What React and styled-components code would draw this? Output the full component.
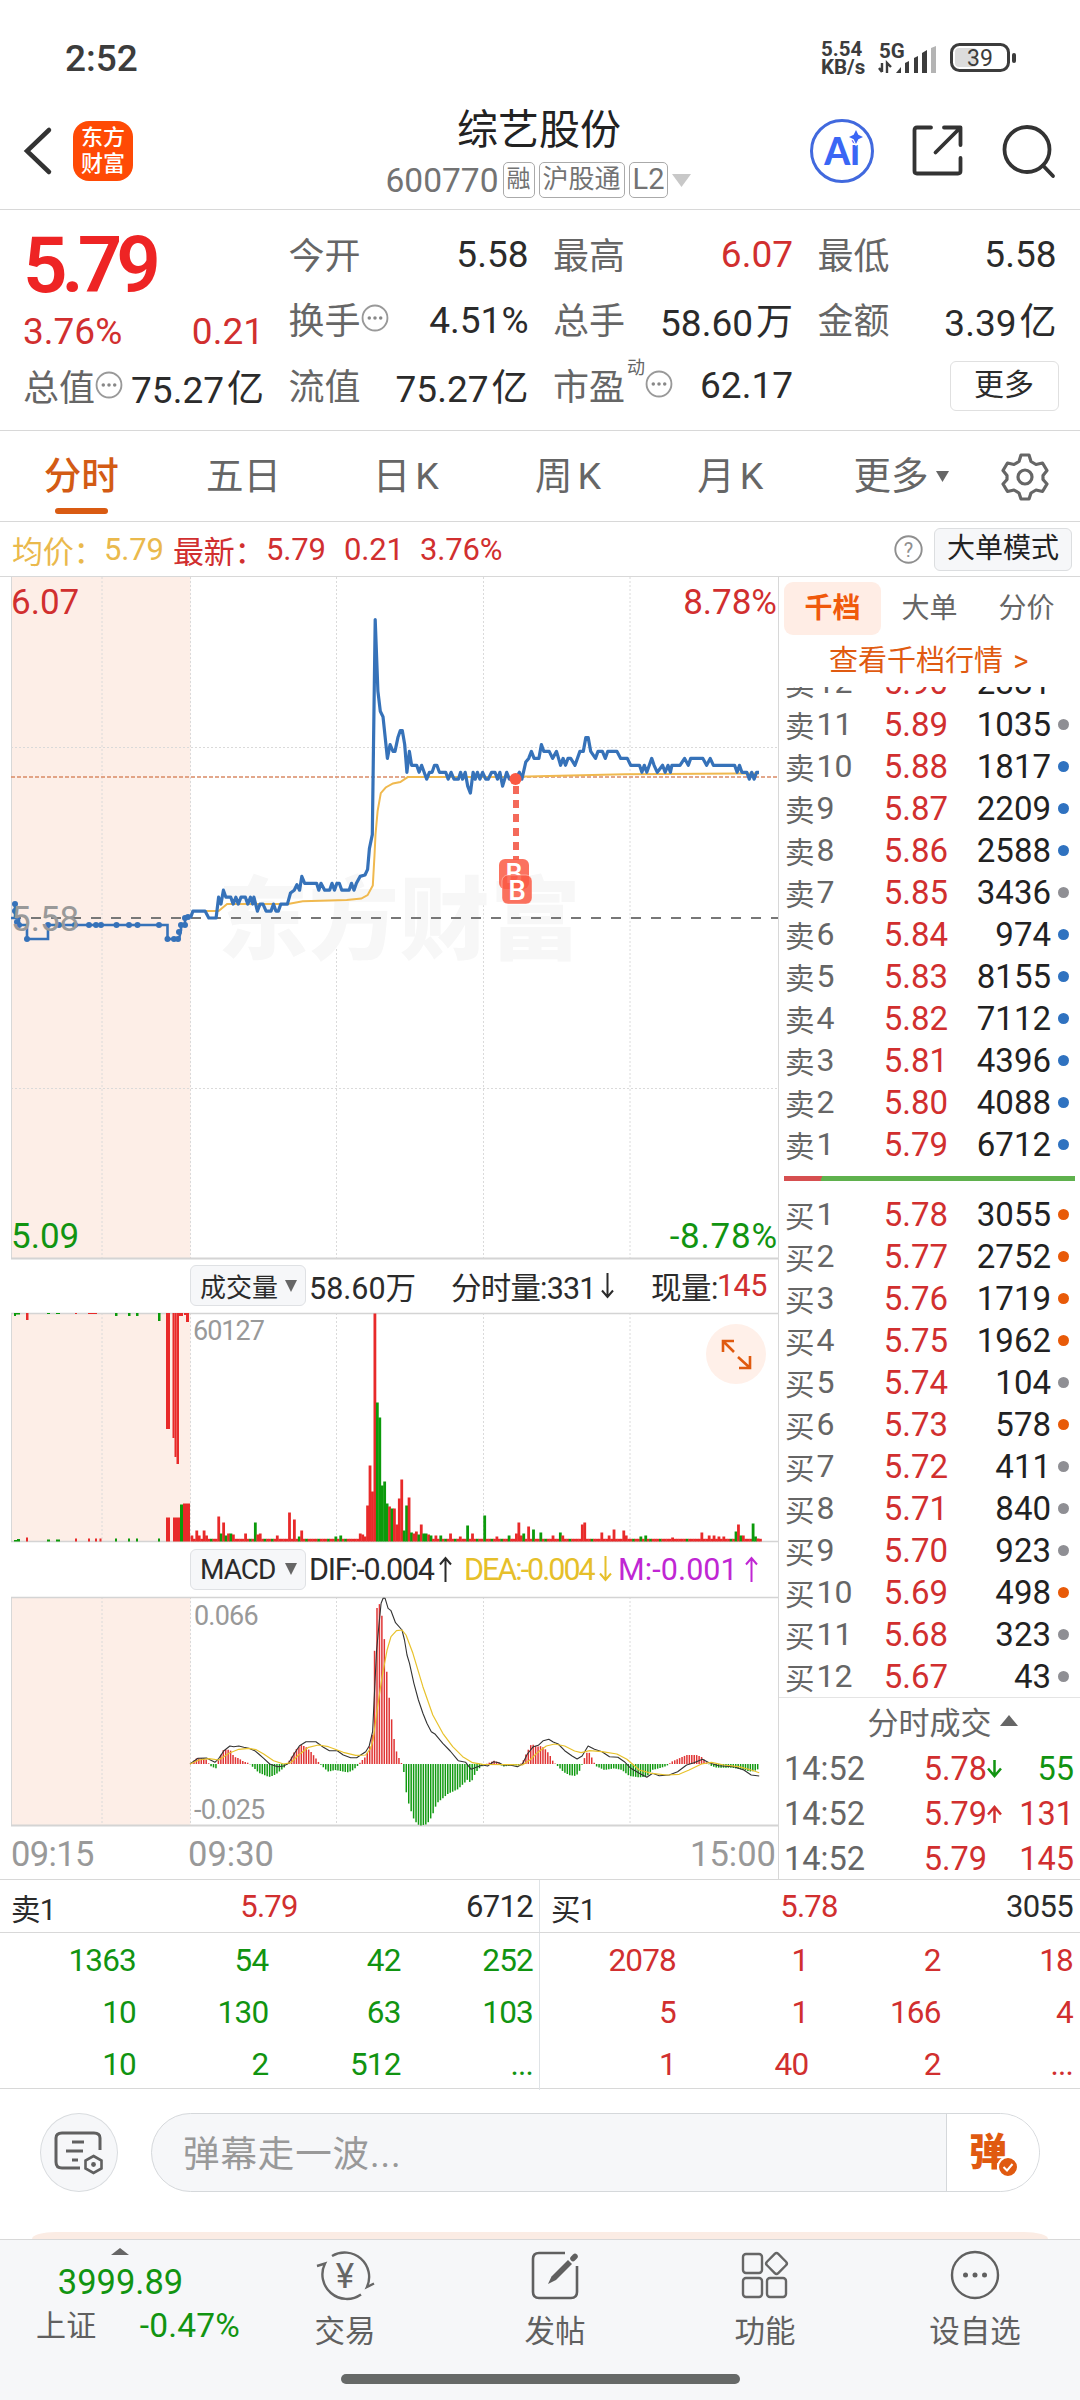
import React from 'react';
import styled, { createGlobalStyle } from 'styled-components';

const red = '#d12f2f';
const green = '#119411';
const orange = '#e05a10';
const line = '#d8d8d8';

const GlobalStyle = createGlobalStyle`
  * {
    box-sizing: border-box;
  }
  body {
    margin: 0;
    background: #fff;
    color: #2b2b2b;
    font-family: Roboto, "Noto Sans CJK SC", sans-serif;
  }
  svg {
    display: block;
    flex: none;
    overflow: visible;
  }
`;

const Page = styled.div`
  width: 1080px;
  height: 2400px;
  overflow: hidden;
  display: flex;
  flex-direction: column;
  white-space: nowrap;
`;

/* status bar + title */

const StatusBar = styled.div`
  height: 116px;
  padding: 0 62px 0 65px;
  display: flex;
  align-items: center;
  justify-content: space-between;
  color: #3c3c3c;
`;

const Clock = styled.div`
  font-size: 37px;
  font-weight: 500;
`;

const StatusRight = styled.div`
  display: flex;
  align-items: center;
`;

const NetSpeed = styled.div`
  width: 58px;
  font-size: 20.5px;
  font-weight: 700;
  line-height: 18px;
`;

const Header = styled.header`
  height: 94px;
  padding: 0 24px 24px;
  display: grid;
  grid-template-columns: 300px 1fr 300px;
  align-items: center;
  border-bottom: 1px solid ${line};
`;

const HeaderSide = styled.div`
  display: flex;
  align-items: center;
  gap: ${props => (props.$end ? 38 : 22)}px;
  justify-content: ${props => (props.$end ? 'flex-end' : 'flex-start')};
`;

const Logo = styled.div`
  width: 60px;
  height: 60px;
  border-radius: 16px;
  background: #ff4a05;
  color: #fff;
  font-size: 22px;
  font-weight: 500;
  line-height: 26px;
  text-align: center;
  padding-top: 4px;
`;

const TitleBlock = styled.div`
  display: flex;
  flex-direction: column;
  align-items: center;
  height: 94px;
  margin: -12px 0;
`;

const Title = styled.div`
  font-size: 41px;
  line-height: 50px;
  margin: 1px 2px 7px 0;
  color: #222;
`;

const SubTitle = styled.div`
  display: flex;
  align-items: center;
  height: 36px;
  gap: 4px;
  margin-left: -3px;
  font-size: 33.5px;
  color: #737373;
`;

const Tag = styled.span`
  height: 36px;
  padding: 0 3px;
  border: 1.5px solid #aaa;
  border-radius: 5px;
  font-size: ${props => props.$size || 26}px;
  line-height: 33px;
`;

const AiBadge = styled.div`
  width: 64px;
  height: 64px;
  position: relative;
  border: 3px solid #4169de;
  border-radius: 50%;
  color: #3a66f5;
  font-family: Lato, sans-serif;
  font-size: 37px;
  font-weight: 900;
  line-height: 57px;
  text-align: center;
  svg {
    position: absolute;
    right: 8px;
    top: 8px;
  }
`;

/* quote summary */

const Quote = styled.section`
  height: 221px;
  padding: 12px 24px 0 23px;
  display: grid;
  grid-template-columns: 241px 240px 240px 239px;
  column-gap: 24.5px;
  border-bottom: 1px solid ${line};
`;

const QuoteRow = styled.div`
  height: ${props => props.$h || 65.5}px;
  display: flex;
  align-items: center;
  justify-content: space-between;
  font-size: 37px;
  color: ${props => props.$color || '#2b2b2b'};
`;

const QuoteLabel = styled.span`
  display: flex;
  align-items: center;
  margin-top: -4px;
  font-size: 36px;
  color: #666;
  sup {
    font-size: 18px;
    line-height: 20px;
    align-self: flex-start;
    margin-left: 2px;
  }
`;

const Unit = styled.span`
  position: relative;
  top: -1px;
  margin-left: 3px;
`;

const BigPrice = styled.span`
  font-size: 78px;
  font-weight: 600;
  letter-spacing: -6px;
  color: #ee2424;
`;

const MoreButton = styled.span`
  width: 109px;
  height: 50px;
  margin: 0 -2px 0 auto;
  border: 1.5px solid #e0e0e0;
  border-radius: 6px;
  font-size: 30px;
  line-height: 46px;
  text-align: center;
`;

/* period tabs */

const Tabs = styled.nav`
  height: 91px;
  display: flex;
  border-bottom: 1px solid ${line};
`;

const Tab = styled.div`
  width: ${props => props.$w || 162.3}px;
  padding-top: 22px;
  display: flex;
  flex-direction: column;
  align-items: center;
  font-size: 37.5px;
  line-height: 47px;
  font-weight: ${props => (props.$active ? 500 : 400)};
  color: ${props => (props.$active ? '#d35b14' : '#666')};
  &::after {
    content: "";
    width: 53px;
    height: 6px;
    margin-top: 8px;
    border-radius: 3px;
    background: ${props => (props.$active ? '#d95b12' : 'transparent')};
  }
`;

const TabLabel = styled.span`
  display: flex;
  align-items: center;
  gap: ${props => props.$gap || 5}px;
`;

const InfoRow = styled.div`
  height: 55px;
  padding: 0 8px 0 12px;
  display: flex;
  align-items: center;
  font-size: 31px;
  letter-spacing: -0.2px;
  color: ${red};
  border-bottom: 1px solid ${line};
`;

const InfoItem = styled.span`
  width: ${props => props.$w}px;
  color: ${props => props.$color || red};
`;

const ModeButton = styled.span`
  width: 138px;
  height: 43px;
  margin-left: 11px;
  border: 1px solid #dcdee0;
  border-radius: 6px;
  background: #f6f7f9;
  color: #222;
  font-size: 28px;
  letter-spacing: 0;
  line-height: 39px;
  text-align: center;
`;

/* charts */

const Main = styled.main`
  height: 1303px;
  display: flex;
  border-bottom: 1px solid ${line};
`;

const Charts = styled.div`
  width: 779px;
  border-right: 1px solid ${line};
`;

const IndicatorRow = styled.div`
  height: ${props => props.$h}px;
  padding: 0 0 2px 190px;
  display: flex;
  align-items: center;
  font-size: 30.5px;
`;

const Selector = styled.span`
  width: 116px;
  height: 41px;
  flex: none;
  margin-right: 3px;
  padding: 0 8px 0 9px;
  display: flex;
  align-items: center;
  justify-content: space-between;
  border: 1px solid #dfe1e4;
  border-radius: 6px;
  background: #f6f7f9;
  font-size: ${props => props.$size || 26}px;
  letter-spacing: ${props => props.$ls || 0}px;
`;

const Reading = styled.span`
  width: ${props => props.$w}px;
  flex: none;
  display: flex;
  align-items: center;
  gap: ${props => props.$gap || 5}px;
  color: ${props => props.$color || '#2b2b2b'};
  letter-spacing: ${props => props.$ls || 0}px;
  b {
    font-weight: 400;
    color: ${red};
    margin-left: -6px;
  }
`;

const TimeAxis = styled.div`
  height: 51px;
  padding: 0 2px 0 11px;
  display: flex;
  align-items: center;
  color: #999;
  font-size: 34.5px;
  span:nth-child(1) {
    width: 177px;
    letter-spacing: -0.6px;
  }
  span:nth-child(2) {
    flex: 1;
  }
`;

/* order book */

const Book = styled.aside`
  flex: 1;
  padding-top: 5px;
`;

const BookTabs = styled.div`
  display: flex;
  padding-left: 5px;
`;

const BookTab = styled.span`
  width: 97px;
  height: 53px;
  border-radius: 9px;
  font-size: 28px;
  line-height: 53px;
  text-align: center;
  font-weight: ${props => (props.$active ? 700 : 400)};
  color: ${props => (props.$active ? '#f0590c' : '#666')};
  background: ${props => (props.$active ? '#ffede5' : 'transparent')};
`;

const BookLink = styled.div`
  height: 52px;
  padding-left: 50px;
  font-size: 29px;
  line-height: 52px;
  word-spacing: 3px;
  color: ${orange};
`;

const SellList = styled.div`
  height: 478px;
  overflow: hidden;
  display: flex;
  flex-direction: column;
  justify-content: flex-end;
`;

const Level = styled.div`
  height: 42px;
  flex: none;
  padding-left: 6px;
  display: grid;
  grid-template-columns: 63px 100px 103px 1fr;
  align-items: center;
  font-size: 33px;
  color: ${red};
`;

const LevelName = styled.span`
  font-size: 29.5px;
  color: #666;
  display: flex;
  align-items: center;
  gap: 2px;
  span {
    font-size: 32px;
  }
`;

const Right = styled.span`
  text-align: right;
  color: ${props => props.$color || 'inherit'};
`;

const Dot = styled.i`
  width: 11px;
  height: 11px;
  margin-left: 7px;
  border-radius: 50%;
  background: ${props => props.$color};
`;

const RatioBar = styled.div`
  height: 5px;
  margin: 11px 5px 12px;
  background: linear-gradient(115deg, #d64f50 0 35px, #5fb14d 35px);
`;

const TradesTitle = styled.div`
  height: 50px;
  border-top: 1px solid #e4e4e4;
  display: flex;
  align-items: center;
  justify-content: center;
  gap: 8px;
  padding: 0 0 4px 26px;
  font-size: 31px;
  color: #666;
`;

const Trade = styled.div`
  height: 44.7px;
  padding: 0 6px 0 5px;
  display: grid;
  grid-template-columns: 100px 103px 20px 1fr;
  align-items: center;
  font-size: 32.5px;
  color: #666;
`;

/* level 2 queue */

const Queue = styled.section`
  height: 209px;
  display: grid;
  grid-template-columns: 540px 540px;
  border-bottom: 1px solid ${line};
`;

const QueueHalf = styled.div`
  padding-right: ${props => (props.$last ? 7 : 6)}px;
  border-right: ${props => (props.$last ? 'none' : '1px solid #dfe3e6')};
`;

const QueueHead = styled.div`
  height: 53px;
  padding: 1px 7px 0 11px;
  margin-right: -7px;
  display: grid;
  grid-template-columns: 1fr 1fr 1fr;
  align-items: center;
  border-bottom: 1px solid ${line};
  font-size: 31px;
  letter-spacing: -0.7px;
  span:nth-child(2) {
    text-align: center;
    padding-right: 6px;
    color: ${red};
  }
  span:nth-child(3) {
    text-align: right;
  }
  span:nth-child(1) {
    font-size: 29.5px;
  }
`;

const QueueGrid = styled.div`
  padding-top: 1px;
  display: grid;
  grid-template-columns: 136px repeat(3, 1fr);
  grid-auto-rows: 52px;
  align-items: center;
  text-align: right;
  font-size: 31.5px;
  letter-spacing: -0.8px;
  color: ${props => props.$color};
`;

/* comment bar */

const CommentBar = styled.section`
  height: 150px;
  padding: 24px 40px 0;
  display: flex;
`;

const RoundButton = styled.div`
  width: 78px;
  height: 79px;
  margin-right: 33px;
  border: 1.5px solid #d9dcdf;
  border-radius: 50%;
  background: #f6f7f9;
  display: flex;
  align-items: center;
  justify-content: center;
`;

const CommentBox = styled.div`
  flex: 1;
  height: 79px;
  display: flex;
  align-items: center;
  border: 1.5px solid #d5d8db;
  border-radius: 40px;
  background: #f6f7f9;
  overflow: hidden;
`;

const Placeholder = styled.span`
  flex: 1;
  padding-left: 31px;
  margin-top: -2px;
  font-size: 36.5px;
  letter-spacing: 0.9px;
  color: #999;
`;

const BarrageButton = styled.div`
  width: 93px;
  height: 100%;
  padding-left: 22px;
  position: relative;
  border-left: 1.5px solid #d5d8db;
  background: #fff;
  color: ${orange};
  font-size: 38px;
  font-weight: 900;
  line-height: 76px;
  svg {
    position: absolute;
    left: 50px;
    top: 42px;
  }
`;

const PeachCard = styled.div`
  height: 7px;
  margin: -7px 32px 0;
  border-radius: 24px 24px 0 0 / 7px 7px 0 0;
  background: #fbece4;
`;

/* bottom nav */

const BottomNav = styled.footer`
  height: 161px;
  border-top: 1px solid ${line};
  background: #f6f7f9;
  color: #606060;
`;

const NavItems = styled.div`
  height: 134px;
  display: flex;
`;

const NavItem = styled.div`
  width: 210px;
  padding-top: 10px;
  display: flex;
  flex-direction: column;
  align-items: center;
  font-size: 30.5px;
  line-height: 40px;
  gap: 10px;
`;

const IndexItem = styled.div`
  width: 240px;
  padding-top: 8px;
  display: flex;
  flex-direction: column;
  align-items: center;
`;

const IndexValue = styled.div`
  margin: 6px 0 1px 1px;
  font-size: 34.5px;
  line-height: 42px;
  color: ${green};
`;

const IndexChange = styled.div`
  width: 204px;
  align-self: flex-end;
  display: flex;
  align-items: center;
  justify-content: space-between;
  font-size: 33.5px;
  line-height: 43px;
  letter-spacing: 0.2px;
  color: ${green};
  span {
    font-size: 30px;
    color: #606060;
  }
`;

const HomeIndicator = styled.div`
  width: 399px;
  height: 10px;
  margin: 0 auto;
  border-radius: 5px;
  background: #666968;
`;

/* icons */

const Triangle = ({ w = 12, h = 11, color = '#666', up }) => (
  <svg width={w} height={h} viewBox="0 0 10 10" preserveAspectRatio="none">
    <path d={up ? 'M0 10L5 0L10 10Z' : 'M0 0L5 10L10 0Z'} fill={color} />
  </svg>
);

const Arrow = ({ up, w = 13, h = 26, color = '#2b2b2b', sw = 2 }) => (
  <svg width={w} height={h} viewBox={`0 0 ${w} ${h}`} fill="none" stroke={color} strokeWidth={sw}>
    {up
      ? <path d={`M${w / 2} ${h}V2M1 ${w / 2 + 2}L${w / 2} 2L${w - 1} ${w / 2 + 2}`} />
      : <path d={`M${w / 2} 0V${h - 2}M1 ${h - w / 2 - 2}L${w / 2} ${h - 2}L${w - 1} ${h - w / 2 - 2}`} />}
  </svg>
);

const DotsIcon = () => (
  <svg width="28" height="28" viewBox="0 0 27 27">
    <circle cx="13.5" cy="13.5" r="12" fill="none" stroke="#999" strokeWidth="1.8" />
    {[8, 13.5, 19].map(x => <circle key={x} cx={x} cy="13.5" r="1.7" fill="#888" />)}
  </svg>
);

const Signal = () => (
  <svg width="58" height="32" viewBox="0 0 58 32" fill="#3c3c3c">
    <text x="0" y="15.5" fontSize="20.5" fontWeight="700">5G</text>
    <path d="M3 21V30M3 30L0 26M8 31V21L12 25" stroke="#3c3c3c" strokeWidth="2.4" fill="none" />
    <path d="M17 31L22 25V31Z" />
    <path d="M26 21L30 19V31H26ZM35 16L39 14V31H35ZM43 11L48 8V31H43Z" />
    <path d="M52 6L57 4V31H52Z" fill="#b4b4b4" />
  </svg>
);

const Battery = () => (
  <svg width="68" height="30" viewBox="0 0 68 30">
    <rect x="5" y="5" width="22" height="19" rx="4" fill="#dcdcdc" />
    <rect x="1.5" y="1.5" width="57" height="26" rx="8" fill="none" stroke="#3c3c3c" strokeWidth="3" />
    <rect x="62" y="10" width="4" height="10" rx="2" fill="#3c3c3c" />
    <text x="30" y="22.8" fontSize="23" textAnchor="middle" fill="#3c3c3c">39</text>
  </svg>
);

const BackIcon = () => (
  <svg width="27" height="46" viewBox="0 0 27 46" fill="none" stroke="#333" strokeWidth="4.5">
    <path d="M25 2L3 23L25 44" strokeLinecap="round" />
  </svg>
);

const ShareIcon = () => (
  <svg width="52" height="52" viewBox="0 0 52 52" fill="none" stroke="#333" strokeWidth="3.8" strokeLinecap="round" strokeLinejoin="round">
    <path d="M19 2.5H5Q2.5 2.5 2.5 5V46Q2.5 48.5 5 48.5H46Q48.5 48.5 48.5 46V33" />
    <path d="M32 2.5H48.5V20M47 4L23.5 27.5" />
  </svg>
);

const SearchIcon = () => (
  <svg width="54" height="54" viewBox="0 0 54 54" fill="none" stroke="#333" strokeWidth="3.8" strokeLinecap="round">
    <circle cx="25" cy="25.5" r="22.5" />
    <path d="M41 41.5L51 52" />
  </svg>
);

const GearIcon = () => (
  <svg width="48" height="48" viewBox="0 0 48 48" fill="none" stroke="#666" strokeWidth="3.2" strokeLinejoin="round">
    <path d="M20 2H28L30 8.5L35 11.5L41.5 10L46 17.5L42 22.5V26.5L46 31L41.5 38.5L35 37L30 40L28 46H20L18 40L13 37L6.5 38.5L2 31L6 26.5V22.5L2 17.5L6.5 10L13 11.5L18 8.5Z" />
    <circle cx="24" cy="24" r="7" />
  </svg>
);

const HelpIcon = () => (
  <svg width="29" height="29" viewBox="0 0 29 29">
    <circle cx="14.5" cy="14.5" r="13.2" fill="none" stroke="#8f8f8f" strokeWidth="1.9" />
    <text x="14.5" y="21.5" fontSize="20" textAnchor="middle" fill="#8f8f8f">?</text>
  </svg>
);

const NoteIcon = () => (
  <svg width="50" height="46" viewBox="0 0 50 46" fill="none" stroke="#606060" strokeWidth="3">
    <path d="M46 20V8Q46 3 40 3H8Q2 3 2 8V32Q2 38 8 38H26" />
    <path d="M18 12H30M12 21H29M18 30H24" />
    <path d="M39.500 26L47.500 30.500V38.500L39.500 43L31.500 38.500V30.500Z" strokeWidth="2.600" />
    <circle cx="39.500" cy="34.500" r="2.400" fill="#606060" stroke="none" />
  </svg>
);

const TradeIcon = () => (
  <svg width="60" height="52" viewBox="0 0 60 52" fill="none" stroke="#666" strokeWidth="2.4">
    <path d="M17 6A24.500 24.500 0 0 1 52 37L59 33.500" />
    <path d="M2 16L10 13.500A24.500 24.500 0 0 0 46 44.500" />
    <text x="30" y="38" fontSize="35" fill="#666" stroke="none" textAnchor="middle">¥</text>
  </svg>
);

const PostIcon = () => (
  <svg width="50" height="52" viewBox="0 0 50 52" fill="none" stroke="#606060" strokeWidth="2.6">
    <path d="M35 3H9Q3 3 3 9V42Q3 48 9 48H41Q47 48 47 42V16" />
    <path d="M38 10L42 14L26 30L18 34L21.500 26.500Z" fill="#606060" stroke="none" />
    <path d="M43 8.500L45 6.500" strokeWidth="5.500" strokeLinecap="round" />
  </svg>
);

const GridIcon = () => (
  <svg width="50" height="52" viewBox="0 0 50 52" fill="none" stroke="#666" strokeWidth="2.4">
    <rect x="3" y="4" width="19" height="19" rx="3" />
    <rect x="3" y="28" width="19" height="19" rx="3" />
    <rect x="27" y="28" width="19" height="19" rx="3" />
    <rect x="28.500" y="5.500" width="16" height="16" rx="2.500" transform="rotate(45 36.500 13.500)" />
  </svg>
);

const MoreIcon = () => (
  <svg width="50" height="52" viewBox="0 0 50 52" fill="#606060">
    <circle cx="25" cy="25" r="23" fill="none" stroke="#606060" strokeWidth="2.4" />
    {[15.5, 25, 34.5].map(x => <circle key={x} cx={x} cy="25" r="2.5" />)}
  </svg>
);

/* chart data: minutes from 09:30, price in ticks of 0.01 over the previous close */

const OPEN_X = 190.5;
const MINUTE = 2.44;
const CLOSE_Y = 918;
const TICK = 6.94;

const prices = [
  0, 0, 1, 1, 6, 1, 7.5, 0, 10.5, 0, 11.5, 3, 12.5, 2, 13.5, 4, 14.5, 3, 16.5, 3, 17.5, 2, 18.6, 3, 19.6, 2, 20.7, 3,
  22.5, 3, 23.5, 2, 24.6, 3, 25.5, 2, 26, 3, 27.4, 1, 28.5, 2, 29.7, 2, 31, 1, 33, 1, 34, 2, 35, 1, 36, 1, 37, 2, 39.7, 2,
  41, 3.6, 42.5, 4, 43.6, 4.8, 44.7, 4, 45.6, 6, 46.8, 5, 51.7, 5, 52.6, 4, 53.5, 5, 55, 4, 57, 4, 58, 5, 59, 4, 60, 5,
  61, 5, 62, 4, 65, 4, 66, 5, 67, 4, 68, 5, 69.5, 6, 71.5, 6.2, 72.6, 7, 73.3, 10, 74.5, 12, 75.7, 43, 76.8, 32.7,
  77.8, 29.8, 78.9, 29, 80.7, 23, 81.8, 25, 83, 24, 83.8, 24, 85, 26, 86, 27, 86.8, 27, 87.8, 25, 88.7, 21, 89.7, 24,
  90.6, 22, 92.7, 22, 93.7, 21, 94.7, 22, 96.8, 20, 97.9, 21, 99, 21, 100, 22, 101, 22, 102, 21, 104.6, 21, 105.6, 20,
  106.8, 21, 108, 20, 109.8, 20, 110.7, 21, 111.5, 20, 112.6, 21, 113.6, 19, 114.7, 18, 115.8, 21, 116.7, 20, 117.6, 21,
  118.6, 20, 119.7, 21, 121, 20, 122, 20, 123.4, 21, 124.8, 21, 125.8, 20, 126.8, 21, 127.9, 19, 129.6, 21, 130.7, 20,
  133, 20, 134.8, 21, 135.8, 20, 137.4, 22.5, 138.6, 23, 139.7, 24, 140.8, 23, 142.8, 23, 143.8, 25, 144.8, 24, 147, 24,
  148.4, 23, 150, 24, 151.7, 22, 152.7, 23, 153.7, 22, 154.7, 23, 155.8, 23, 157.6, 22, 159.6, 24, 161, 24, 162, 26,
  163, 26, 164, 24, 166, 23, 167, 24, 168.8, 24, 170, 23, 171, 24, 174.8, 24, 176.3, 23, 179, 23, 180.4, 22, 184, 22,
  185, 21, 186, 22, 187, 21, 189, 23, 190, 22, 191.3, 21, 193.5, 22, 194.5, 21, 195.7, 22, 196.7, 21, 197.3, 22,
  200.6, 22, 202.5, 23, 204, 22, 205, 23, 210, 23, 211.5, 22, 213, 23, 214.3, 22, 223, 22, 224, 21, 225, 22, 226, 21,
  228, 21, 229, 20, 230, 21, 231, 20, 232, 21, 233, 21,
];

const average = [
  0, 0, 1, 1, 11.5, 1, 15, 2, 40, 2, 46, 2.4, 64, 2.6, 70, 2.8, 72.6, 3.3, 74.7, 4.7, 75.4, 9, 75.8, 12, 76.7, 15.4,
  78, 18, 80, 18.8, 83, 19.4, 86, 19.6, 89, 20.3, 130, 20.3, 138, 20.4, 178, 20.7, 225, 20.8, 233, 20.8,
];

// call auction, already in chart pixels
const auction = 'M11 918H15V904V918H19V925H27V939H48V925H167.500V939H179L181 930V925H185V918L190.500 917';
const auctionDots = [
  [15, 904], [15, 911], [17, 922], [19, 925], [27, 939], [48, 925], [59, 925], [75, 925], [89, 925], [96, 925], [101, 925],
  [116.5, 925], [129, 925], [137.5, 925], [159, 925], [167.5, 939], [174, 939], [178, 939], [179, 932], [181, 925],
  [185, 925], [185, 918], [188, 917],
];

const toPath = (list) => {
  let d = '';
  for (let i = 0; i < list.length; i += 2) {
    const x = OPEN_X + list[i] * MINUTE;
    const y = CLOSE_Y - list[i + 1] * TICK;
    d += `${i ? 'L' : 'M'}${x.toFixed(1)} ${y.toFixed(1)}`;
  }
  return d;
};

const gridX = [102, 190.5, 336.5, 483.5, 630];

const Grid = ({ top, bottom }) => (
  <g>
    <rect x="11" y={top} width="179.500" height={bottom - top} fill="#fdeee7" />
    {gridX.map(x => (
      <path key={x} d={`M${x} ${top}V${bottom}`} stroke="#dadada" strokeDasharray="2 2" />
    ))}
    <path d={`M11.500 ${top}V${bottom}`} stroke="#d8d8d8" />
  </g>
);

const PriceChart = () => (
  <svg width="778" height="683" viewBox="0 577 778 683" fill="none">
    <Grid top={577} bottom={1258} />
    <path d="M11 747.500H778M11 1088.500H778" stroke="#dadada" strokeDasharray="2 2" />
    <path d="M11 1258.500H778" stroke="#d4d4d4" strokeWidth="2" />
    <text x="218" y="952" fontSize="90" fontWeight="900" letterSpacing="0.800" fill="#f7f7f7">东方财富</text>
    <path d="M11 777H778" stroke="#d98a66" strokeWidth="1.500" strokeDasharray="4 2" />
    <path d="M11 918H778" stroke="#777" strokeWidth="1.800" strokeDasharray="10 10" />
    <path d={toPath(average)} stroke="#f0b94f" strokeWidth="2" />
    <path d={auction} stroke="#3672b9" strokeWidth="2.600" />
    {auctionDots.map(([x, y]) => <circle key={`${x}-${y}`} cx={x} cy={y} r="3" fill="#3672b9" />)}
    <path d={toPath(prices)} stroke="#3672b9" strokeWidth="3.200" strokeLinejoin="round" />
    <g fill="#fa5943">
      <circle cx="515.500" cy="779" r="6" />
      <path d="M516 786V860" stroke="#f46a5a" strokeWidth="6" strokeDasharray="8 6" />
      <rect x="499" y="859" width="30" height="30" rx="6" fillOpacity="0.850" />
      <text x="514" y="883" fontSize="27" fontWeight="500" textAnchor="middle" fill="#fff">B</text>
      <rect x="502" y="875" width="30" height="29" rx="6" fillOpacity="0.850" stroke="#fff" strokeOpacity="0.400" />
      <text x="517" y="899.500" fontSize="28" fontWeight="500" textAnchor="middle" fill="#fff">B</text>
    </g>
    <g fontSize="35">
      <text x="11" y="614" fill={red}>6.07</text>
      <text x="777" y="614" fill={red} textAnchor="end">8.78%</text>
      <text x="11" y="931" fill="#999">5.58</text>
      <text x="11" y="1248" fill={green}>5.09</text>
      <text x="778" y="1248" fill={green} textAnchor="end" letterSpacing="0.800">-8.78%</text>
    </g>
  </svg>
);

// minute: [height in px, colour]
const volumes = {
  0: [6, 'r'], 2: [11, 'r'], 3: [6, 'r'], 5: [11, 'r'], 6: [6, 'r'], 11: [25, 'r'], 12: [8, 'g'], 13: [19, 'r'], 14: [6, 'g'],
  15: [8, 'r'], 16: [8, 'g'], 17: [7, 'r'], 22: [8, 'r'], 26: [19, 'g'], 27: [7, 'r'], 28: [8, 'r'], 35: [6, 'r'],
  40: [29, 'r'], 42: [22, 'r'], 44: [5, 'g'], 45: [11, 'r'], 59: [5, 'g'], 61: [6, 'g'], 69: [8, 'r'], 70: [7, 'r'], 71: [5, 'r'],
  72: [36, 'r'], 73: [76, 'r'], 74: [50, 'r'], 75: [228, 'r'], 76: [139, 'g'], 77: [124, 'g'], 78: [56, 'g'], 79: [60, 'g'],
  80: [38, 'g'], 81: [35, 'r'], 82: [33, 'g'], 83: [33, 'r'], 84: [17, 'r'], 85: [43, 'r'], 86: [62, 'r'], 87: [11, 'g'],
  88: [36, 'g'], 89: [44, 'r'], 90: [9, 'g'], 91: [8, 'r'], 92: [10, 'r'], 93: [7, 'g'], 94: [17, 'r'], 95: [8, 'g'],
  96: [8, 'g'], 97: [7, 'r'], 98: [6, 'g'], 100: [6, 'r'], 102: [6, 'g'], 106: [8, 'r'], 110: [5, 'r'], 113: [16, 'g'],
  115: [8, 'r'], 120: [26, 'g'], 125: [5, 'r'], 130: [6, 'g'], 133: [8, 'r'], 134: [19, 'r'], 135: [6, 'r'], 136: [8, 'g'],
  138: [15, 'r'], 140: [12, 'g'], 143: [9, 'g'], 148: [6, 'r'], 151: [9, 'g'], 152: [6, 'r'], 160: [17, 'r'], 161: [19, 'r'],
  168: [9, 'r'], 171: [6, 'r'], 173: [12, 'r'], 177: [11, 'r'], 178: [6, 'r'], 184: [5, 'g'], 186: [6, 'g'], 197: [4, 'r'],
  209: [9, 'r'], 212: [6, 'r'], 214: [6, 'r'], 216: [5, 'r'], 218: [5, 'r'], 223: [10, 'g'], 224: [17, 'r'], 225: [6, 'g'],
  226: [6, 'r'], 230: [18, 'g'], 231: [5, 'g'], 232: [3, 'r'],
};

const greenMinutes = [8, 24, 30, 33, 47, 52, 56, 63, 104, 108, 117, 123, 127, 145, 155, 164, 181, 188, 192, 203, 221];

// x, width, height, colour; hanging from the top edge and standing on the base line
const auctionTop = [
  [14, 2, 3, 'g'], [16, 4, 1.5, 'g'], [26, 2.5, 7, 'r'], [47, 3, 1, 'g'], [56, 4, 1, 'g'], [75, 2, 1, 'r'], [88, 9, 1, 'r'],
  [115, 2.5, 3, 'g'], [128, 2.5, 3, 'g'], [136, 2.5, 3, 'g'], [158, 2.5, 8, 'g'], [166, 4, 116, 'r'], [172.500, 2, 125, 'r'],
  [174.500, 2, 144, 'r'], [176.500, 2.500, 151, 'r'], [179, 4, 3, 'r'], [184, 3, 2, 'r'], [186, 3, 9, 'r'],
];
const auctionBase = [
  [14, 3, 1.5, 'g'], [17, 3, 2.5, 'g'], [26, 2, 4, 'r'], [47, 3, 2, 'g'], [56, 4, 2, 'g'], [75, 2, 3, 'r'], [88, 2, 3, 'r'],
  [95, 2, 3, 'r'], [99.5, 2, 3, 'r'], [115, 2, 3, 'g'], [128, 2, 3, 'g'], [136, 2, 3, 'g'], [158, 2, 3, 'g'],
  [166, 4, 24, 'r'], [173, 7, 24, 'r'], [180, 3, 37, 'g'], [183, 7, 38, 'r'],
];

const barColor = { r: '#e82a2a', g: '#0b9a0b' };

const VolumeChart = () => (
  <svg width="778" height="230" viewBox="0 1313 778 230">
    <Grid top={1313} bottom={1541} />
    <path d="M11 1313.500H778M11 1541.500H778" stroke="#d4d4d4" strokeWidth="1.500" />
    {auctionTop.map(([x, w, h, c], i) => (
      <rect key={i} x={x} y="1313" width={w} height={h} fill={barColor[c]} />
    ))}
    {auctionBase.map(([x, w, h, c], i) => (
      <rect key={i} x={x} y={1541.5 - h} width={w} height={h} fill={barColor[c]} />
    ))}
    {Array.from({ length: 234 }, (_, m) => {
      const [h, c] = volumes[m] || [2.7, greenMinutes.includes(m) ? 'g' : 'r'];
      return <rect key={m} x={OPEN_X + m * MINUTE} y={1541.5 - h} width="2.800" height={h} fill={barColor[c]} />;
    })}
    <text x="193" y="1340" fontSize="27" letterSpacing="-1" fill="#999">60127</text>
    <circle cx="736" cy="1354" r="30" fill="#fff0e9" />
    <path
      d="M723 1352V1341H734M724 1342L734 1352M738 1357L749 1367M739 1368H750V1356"
      stroke={orange}
      strokeWidth="2.600"
      fill="none"
    />
  </svg>
);

// MACD study, x and y on its own canvas of 1568 x 1050, zero line at 672
const histogram = [
  382, 670, 385, 668, 395, 655, 410, 655, 416, 660, 420, 672, 425, 680, 434, 685, 437, 672, 440, 655, 449, 630, 455, 628, 464, 632,
  470, 650, 480, 655, 490, 665, 500, 669, 506, 678, 520, 698, 541, 711, 555, 703, 565, 690, 575, 678, 582, 660, 595, 628,
  605, 615, 614, 620, 625, 635, 635, 655, 642, 670, 650, 682, 660, 695, 675, 690, 690, 695, 700, 697, 710, 690, 720, 676,
  725, 665, 735, 650, 745, 612, 749, 575, 754, 262, 759, 185, 764, 195, 769, 240, 774, 322, 779, 430, 784, 495, 789, 562,
  794, 618, 799, 645, 804, 660, 809, 676, 814, 712, 818, 780, 823, 795, 828, 822, 833, 842, 843, 857, 858, 853, 868, 830,
  878, 790, 900, 762, 920, 748, 936, 725, 942, 715, 946, 735, 951, 712, 960, 690, 967, 680, 975, 673, 985, 667, 994, 662,
  1003, 668, 1010, 680, 1020, 678, 1042, 676, 1050, 668, 1058, 640, 1068, 612, 1080, 620, 1088, 618, 1098, 630, 1105, 645,
  1112, 665, 1122, 680, 1132, 695, 1145, 706, 1158, 708, 1166, 690, 1172, 665, 1177, 645, 1182, 632, 1187, 645, 1192, 660,
  1197, 678, 1215, 690, 1235, 685, 1250, 690, 1265, 708, 1285, 712, 1300, 710, 1310, 690, 1325, 685, 1340, 678, 1350, 665,
  1365, 655, 1380, 645, 1400, 645, 1412, 652, 1418, 665, 1430, 678, 1440, 683, 1470, 683, 1490, 688, 1510, 695, 1522, 690,
  1527, 680,
];

const dif = [
  382, 672, 398, 655, 415, 654, 432, 667, 440, 655, 450, 632, 462, 618, 470, 620, 480, 618, 490, 622, 500, 625, 512, 632,
  520, 642, 530, 655, 542, 672, 558, 680, 570, 678, 580, 670, 592, 640, 602, 617, 615, 605, 635, 605, 650, 622, 662, 632,
  678, 632, 690, 645, 705, 653, 717, 653, 725, 645, 735, 635, 742, 618, 749, 575, 753, 450, 757, 330, 762, 250, 766, 190,
  770, 175, 774, 175, 780, 205, 786, 212, 795, 248, 808, 270, 813, 300, 818, 345, 823, 370, 832, 430, 841, 480, 850, 520,
  858, 550, 867, 575, 875, 583, 890, 610, 905, 633, 921, 662, 936, 667, 947, 688, 960, 680, 970, 675, 980, 678, 992, 665,
  1003, 668, 1012, 676, 1025, 675, 1040, 680, 1050, 672, 1060, 642, 1072, 620, 1082, 616, 1092, 602, 1103, 598, 1112, 606,
  1122, 612, 1135, 632, 1150, 648, 1160, 657, 1170, 648, 1182, 618, 1195, 628, 1210, 635, 1225, 650, 1242, 652, 1255, 665,
  1268, 685, 1285, 700, 1300, 712, 1312, 700, 1325, 707, 1345, 705, 1362, 695, 1380, 675, 1395, 668, 1412, 658, 1425, 668,
  1445, 677, 1475, 680, 1495, 690, 1510, 705, 1526, 708,
];

const dea = [
  382, 672, 400, 660, 420, 656, 440, 660, 460, 640, 480, 628, 500, 625, 515, 629, 530, 642, 550, 662, 570, 672, 585, 668,
  600, 645, 620, 622, 640, 615, 660, 620, 690, 637, 715, 646, 735, 645, 745, 625, 750, 600, 758, 510, 768, 410, 778, 330,
  786, 290, 797, 272, 808, 270, 816, 285, 830, 340, 850, 440, 870, 525, 890, 580, 910, 620, 930, 650, 950, 668, 970, 673,
  1030, 674, 1050, 675, 1065, 660, 1080, 638, 1098, 618, 1115, 612, 1135, 618, 1155, 633, 1168, 638, 1185, 632, 1210, 635,
  1240, 642, 1260, 658, 1285, 690, 1310, 700, 1340, 705, 1365, 703, 1385, 690, 1410, 672, 1430, 667, 1455, 675, 1485, 680,
  1510, 690, 1526, 698,
];

const studyX = v => v / 2.01;
const studyY = v => 1540 + v / 3;

const studyPath = (list) => {
  let d = '';
  for (let i = 0; i < list.length; i += 2) {
    d += `${i ? 'L' : 'M'}${studyX(list[i]).toFixed(1)} ${studyY(list[i + 1]).toFixed(1)}`;
  }
  return d;
};

const valueAt = (list, x) => {
  for (let i = 2; i < list.length; i += 2) {
    if (x <= list[i]) {
      const t = (x - list[i - 2]) / (list[i] - list[i - 2]);
      return list[i - 1] + t * (list[i + 1] - list[i - 1]);
    }
  }
  return 672;
};

const MacdChart = () => (
  <svg width="778" height="231" viewBox="0 1597 778 231" fill="none">
    <Grid top={1597} bottom={1825} />
    <path d="M11 1597.500H778" stroke="#d4d4d4" strokeWidth="1.500" />
    <path d="M11 1825.500H778" stroke="#d4d4d4" strokeWidth="2" />
    {Array.from({ length: 233 }, (_, m) => {
      const x = 385 + m * 4.905;
      const v = valueAt(histogram, x);
      return (
        <path
          key={m}
          d={`M${studyX(x)} 1764V${studyY(v)}`}
          stroke={v < 672 ? '#e03434' : '#119a11'}
          strokeWidth="1.500"
        />
      );
    })}
    <path d={studyPath(dif)} stroke="#333" strokeWidth="1.100" strokeLinejoin="round" />
    <path d={studyPath(dea)} stroke="#e8c22c" strokeWidth="1.200" strokeLinejoin="round" />
    <g fontSize="27" letterSpacing="-0.800" fill="#999">
      <text x="194" y="1625">0.066</text>
      <text x="194" y="1819">-0.025</text>
    </g>
  </svg>
);

/* table data */

const blue = '#2f72c0';
const gray = '#8f8f94';
const amber = '#e85a08';

const sells = [
  [12, '5.90', 2881, gray], [11, '5.89', 1035, gray], [10, '5.88', 1817, blue], [9, '5.87', 2209, blue],
  [8, '5.86', 2588, blue], [7, '5.85', 3436, gray], [6, '5.84', 974, blue], [5, '5.83', 8155, blue],
  [4, '5.82', 7112, blue], [3, '5.81', 4396, blue], [2, '5.80', 4088, blue], [1, '5.79', 6712, blue],
];

const buys = [
  [1, '5.78', 3055, amber], [2, '5.77', 2752, amber], [3, '5.76', 1719, amber], [4, '5.75', 1962, amber],
  [5, '5.74', 104, gray], [6, '5.73', 578, amber], [7, '5.72', 411, gray], [8, '5.71', 840, gray],
  [9, '5.70', 923, gray], [10, '5.69', 498, amber], [11, '5.68', 323, gray], [12, '5.67', 43, gray],
];

const sellQueue = ['1363', '54', '42', '252', '10', '130', '63', '103', '10', '2', '512', '...'];
const buyQueue = ['2078', '1', '2', '18', '5', '1', '166', '4', '1', '40', '2', '...'];

const Levels = ({ side, rows }) => rows.map(([n, price, size, dot]) => (
  <Level key={n}>
    <LevelName>{side}<span>{n}</span></LevelName>
    <Right>{price}</Right>
    <Right $color="#222">{size}</Right>
    {/* the top level is scrolled half out of view, its dot with it */}
    {n === 12 && side === '卖' ? <span /> : <Dot $color={dot} />}
  </Level>
));

const App = () => (
  <Page>
    <GlobalStyle />
    <StatusBar>
      <Clock>2:52</Clock>
      <StatusRight>
        <NetSpeed>5.54<br />KB/s</NetSpeed>
        <Signal />
        <span style={{ width: 13 }} />
        <Battery />
      </StatusRight>
    </StatusBar>

    <Header>
      <HeaderSide>
        <BackIcon />
        <Logo>东方<br />财富</Logo>
      </HeaderSide>
      <TitleBlock>
        <Title>综艺股份</Title>
        <SubTitle>
          600770
          <Tag $size={24}>融</Tag>
          <Tag>沪股通</Tag>
          <Tag $size={29}>L2</Tag>
          <Triangle w={19} h={13} color="#c8c8c8" />
        </SubTitle>
      </TitleBlock>
      <HeaderSide $end>
        <AiBadge>
          Ai
          <svg width="14" height="14" viewBox="0 0 12 12"><path d="M6 0L8 4L12 6L8 8L6 12L4 8L0 6L4 4Z" fill="#3a66f5" stroke="#fff" strokeWidth="2" paintOrder="stroke" /></svg>
        </AiBadge>
        <ShareIcon />
        <SearchIcon />
      </HeaderSide>
    </Header>

    <Quote>
      <div>
        <QuoteRow $h={87}><BigPrice>5.79</BigPrice></QuoteRow>
        <QuoteRow $h={45} $color={red}><span>3.76%</span><span>0.21</span></QuoteRow>
        <QuoteRow><QuoteLabel>总值<DotsIcon /></QuoteLabel><span>75.27<Unit>亿</Unit></span></QuoteRow>
      </div>
      <div>
        <QuoteRow><QuoteLabel>今开</QuoteLabel>5.58</QuoteRow>
        <QuoteRow><QuoteLabel>换手<DotsIcon /></QuoteLabel>4.51%</QuoteRow>
        <QuoteRow><QuoteLabel>流值</QuoteLabel><span>75.27<Unit>亿</Unit></span></QuoteRow>
      </div>
      <div>
        <QuoteRow><QuoteLabel>最高</QuoteLabel><Right $color={red}>6.07</Right></QuoteRow>
        <QuoteRow><QuoteLabel>总手</QuoteLabel><span>58.60<Unit>万</Unit></span></QuoteRow>
        <QuoteRow><QuoteLabel>市盈<sup>动</sup><DotsIcon /></QuoteLabel>62.17</QuoteRow>
      </div>
      <div>
        <QuoteRow><QuoteLabel>最低</QuoteLabel>5.58</QuoteRow>
        <QuoteRow><QuoteLabel>金额</QuoteLabel><span>3.39<Unit>亿</Unit></span></QuoteRow>
        <QuoteRow><MoreButton>更多</MoreButton></QuoteRow>
      </div>
    </Quote>

    <Tabs>
      <Tab $active>分时</Tab>
      <Tab>五日</Tab>
      <Tab><TabLabel>日<span>K</span></TabLabel></Tab>
      <Tab><TabLabel>周<span>K</span></TabLabel></Tab>
      <Tab><TabLabel>月<span>K</span></TabLabel></Tab>
      <Tab $w={180}><TabLabel $gap={8}>更多<Triangle w={13} h={11} /></TabLabel></Tab>
      <Tab $w={68}><GearIcon /></Tab>
    </Tabs>

    <InfoRow>
      <InfoItem $w={92} $color="#eab94c">均价：</InfoItem>
      <InfoItem $w={69} $color="#eab94c">5.79</InfoItem>
      <InfoItem $w={93}>最新：</InfoItem>
      <InfoItem $w={78}>5.79</InfoItem>
      <InfoItem $w={76}>0.21</InfoItem>
      <InfoItem $w={474}>3.76%</InfoItem>
      <HelpIcon />
      <ModeButton>大单模式</ModeButton>
    </InfoRow>

    <Main>
      <Charts>
        <PriceChart />
        <IndicatorRow $h={53}>
          <Selector>成交量<Triangle w={12} h={12} /></Selector>
          <Reading $w={142}>58.60万</Reading>
          <Reading $w={200} $ls={-0.8}>分时量:331<Arrow /></Reading>
          <Reading $w={120} $ls={-0.5}>现量:<b>145</b></Reading>
        </IndicatorRow>
        <VolumeChart />
        <IndicatorRow $h={54}>
          <Selector $size={28} $ls={-1}>MACD<Triangle w={12} h={12} /></Selector>
          <Reading $w={155} $ls={-1.3}>DIF:-0.004<Arrow up /></Reading>
          <Reading $w={154} $ls={-2}>
            <Reading $color="#e6bf2a" $ls={-2}>DEA:-0.004<Arrow color="#e6bf2a" /></Reading>
          </Reading>
          <Reading $w={150} $gap={7} $ls={0.1} $color="#c026d3">M:-0.001<Arrow up color="#c026d3" /></Reading>
        </IndicatorRow>
        <MacdChart />
        <TimeAxis>
          <span>09:15</span>
          <span>09:30</span>
          <span>15:00</span>
        </TimeAxis>
      </Charts>

      <Book>
        <BookTabs>
          <BookTab $active>千档</BookTab>
          <BookTab>大单</BookTab>
          <BookTab>分价</BookTab>
        </BookTabs>
        <BookLink>查看千档行情 &gt;</BookLink>
        <SellList><Levels side="卖" rows={sells} /></SellList>
        <RatioBar />
        <Levels side="买" rows={buys} />
        <TradesTitle>分时成交<Triangle up w={18} h={11} /></TradesTitle>
        <Trade>
          <span>14:52</span>
          <Right $color={red}>5.78</Right>
          <Arrow w={15} h={18} sw={2.5} color={green} />
          <Right $color={green}>55</Right>
        </Trade>
        <Trade>
          <span>14:52</span>
          <Right $color={red}>5.79</Right>
          <Arrow up w={15} h={18} sw={2.5} color={red} />
          <Right $color={red}>131</Right>
        </Trade>
        <Trade>
          <span>14:52</span>
          <Right $color={red}>5.79</Right>
          <span />
          <Right $color={red}>145</Right>
        </Trade>
      </Book>
    </Main>

    <Queue>
      <QueueHalf>
        <QueueHead><span>卖1</span><span>5.79</span><span>6712</span></QueueHead>
        <QueueGrid $color={green}>{sellQueue.map((v, i) => <span key={i}>{v}</span>)}</QueueGrid>
      </QueueHalf>
      <QueueHalf $last>
        <QueueHead><span>买1</span><span>5.78</span><span>3055</span></QueueHead>
        <QueueGrid $color={red}>{buyQueue.map((v, i) => <span key={i}>{v}</span>)}</QueueGrid>
      </QueueHalf>
    </Queue>

    <CommentBar>
      <RoundButton><NoteIcon /></RoundButton>
      <CommentBox>
        <Placeholder>弹幕走一波...</Placeholder>
        <BarrageButton>
          弹
          <svg width="22" height="22" viewBox="0 0 22 22">
            <circle cx="11" cy="11" r="10" fill={orange} stroke="#fff" strokeWidth="2" />
            <path d="M6.500 11L10 14.500L15.500 8" fill="none" stroke="#fff" strokeWidth="2" />
          </svg>
        </BarrageButton>
      </CommentBox>
    </CommentBar>
    <PeachCard />

    <BottomNav>
      <NavItems>
        <IndexItem>
          <Triangle up w={18} h={7} />
          <IndexValue>3999.89</IndexValue>
          <IndexChange><span>上证</span>-0.47%</IndexChange>
        </IndexItem>
        <NavItem><TradeIcon />交易</NavItem>
        <NavItem><PostIcon />发帖</NavItem>
        <NavItem><GridIcon />功能</NavItem>
        <NavItem><MoreIcon />设自选</NavItem>
      </NavItems>
      <HomeIndicator />
    </BottomNav>
  </Page>
);

export default App;
